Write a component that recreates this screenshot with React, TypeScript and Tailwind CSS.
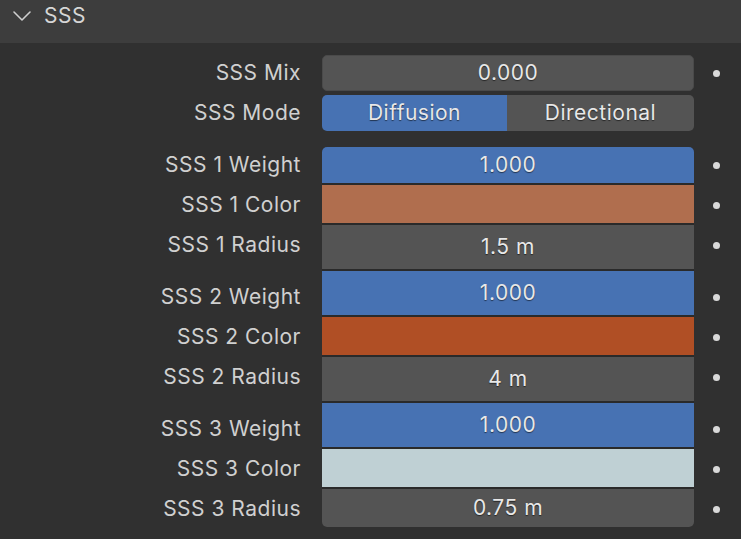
import React from "react";

const font = { fontFamily: "Inter, 'Noto Sans', sans-serif" };

function Dot() {
  return <div className="w-[7px] h-[7px] rounded-full bg-[#d9d9d9]" />;
}

type Field = { h: number; bg: string; text?: string; rt?: boolean; rb?: boolean };

const labelsBlocks = [
  ["SSS 1 Weight", "SSS 1 Color", "SSS 1 Radius"],
  ["SSS 2 Weight", "SSS 2 Color", "SSS 2 Radius"],
  ["SSS 3 Weight", "SSS 3 Color", "SSS 3 Radius"],
];

const fields: Field[] = [
  { h: 36, bg: "bg-[#4772b3]", text: "1.000", rt: true },
  { h: 38, bg: "bg-[#b06e4e]" },
  { h: 44, bg: "bg-[#545454]", text: "1.5 m" },
  { h: 44, bg: "bg-[#4772b3]", text: "1.000" },
  { h: 38, bg: "bg-[#b04f25]" },
  { h: 44, bg: "bg-[#545454]", text: "4 m" },
  { h: 44, bg: "bg-[#4772b3]", text: "1.000" },
  { h: 38, bg: "bg-[#bfd0d4]" },
  { h: 38, bg: "bg-[#545454]", text: "0.75 m", rb: true },
];

const valText = "text-[21px] tracking-[0.5px] text-[#e8e8e8] [text-shadow:0_1px_1px_rgba(0,0,0,0.55)]";
const labText = "text-[21px] tracking-[0.5px] text-[#d0d0d0]";

export default function App() {
  return (
    <div style={font} className="w-[741px] h-[539px] bg-[#303030] overflow-hidden flex flex-col">
      {/* Header */}
      <div className="h-[43px] bg-[#3d3d3d] flex items-start pt-[2px]">
        <div className="flex items-center h-[26px]">
          <svg width="44" height="26" viewBox="0 0 44 26" className="shrink-0">
            <polyline points="14,10 22,18 30,10" fill="none" stroke="#cfcfcf" strokeWidth="1.6" strokeLinecap="round" strokeLinejoin="round" />
          </svg>
          <span className="text-[21px] tracking-[0.5px] text-[#d6d6d6] leading-none">SSS</span>
        </div>
      </div>

      {/* Top rows */}
      <div className="flex flex-col gap-[4px] mt-[12px]">
        <div className="flex items-center h-[36px]">
          <div className={`w-[301px] text-right ${labText}`}>SSS Mix</div>
          <div className={`ml-[21px] w-[372px] h-[36px] rounded-[5px] bg-[#545454] border border-[#4a4a4a] flex items-center justify-center ${valText}`}>
            0.000
          </div>
          <div className="flex-1 flex justify-center pr-[3px]">
            <Dot />
          </div>
        </div>
        <div className="flex items-center h-[36px]">
          <div className={`w-[301px] text-right ${labText}`}>SSS Mode</div>
          <div className="ml-[21px] w-[372px] h-[36px] rounded-[5px] overflow-hidden flex">
            <div className={`w-[185px] bg-[#4772b3] flex items-center justify-center ${valText}`}>Diffusion</div>
            <div className={`flex-1 bg-[#545454] flex items-center justify-center ${valText}`}>Directional</div>
          </div>
          <div className="flex-1" />
        </div>
      </div>

      {/* Blocks */}
      <div className="flex mt-[14px]">
        <div className={`w-[301px] flex flex-col gap-[12px] ${labText}`}>
          {labelsBlocks.map((b, i) => (
            <div key={i} className="flex flex-col">
              {b.map((l) => (
                <div key={l} className="h-[40px] flex items-center justify-end">{l}</div>
              ))}
            </div>
          ))}
        </div>
        <div className="ml-[21px] w-[372px] mt-[2px] flex flex-col gap-[2px] bg-[#2a2a2a] rounded-[5px] self-start">
          {fields.map((f, i) => (
            <div
              key={i}
              style={{ height: f.h }}
              className={`${f.bg} flex items-center justify-center ${valText} ${f.rt ? "rounded-t-[5px]" : ""} ${f.rb ? "rounded-b-[5px]" : ""}`}
            >
              {f.text}
            </div>
          ))}
        </div>
        <div className="flex-1 flex flex-col gap-[12px] pr-[3px]">
          {labelsBlocks.map((b, i) => (
            <div key={i} className="flex flex-col">
              {b.map((l) => (
                <div key={l} className="h-[40px] flex items-center justify-center">
                  <Dot />
                </div>
              ))}
            </div>
          ))}
        </div>
      </div>
    </div>
  );
}
